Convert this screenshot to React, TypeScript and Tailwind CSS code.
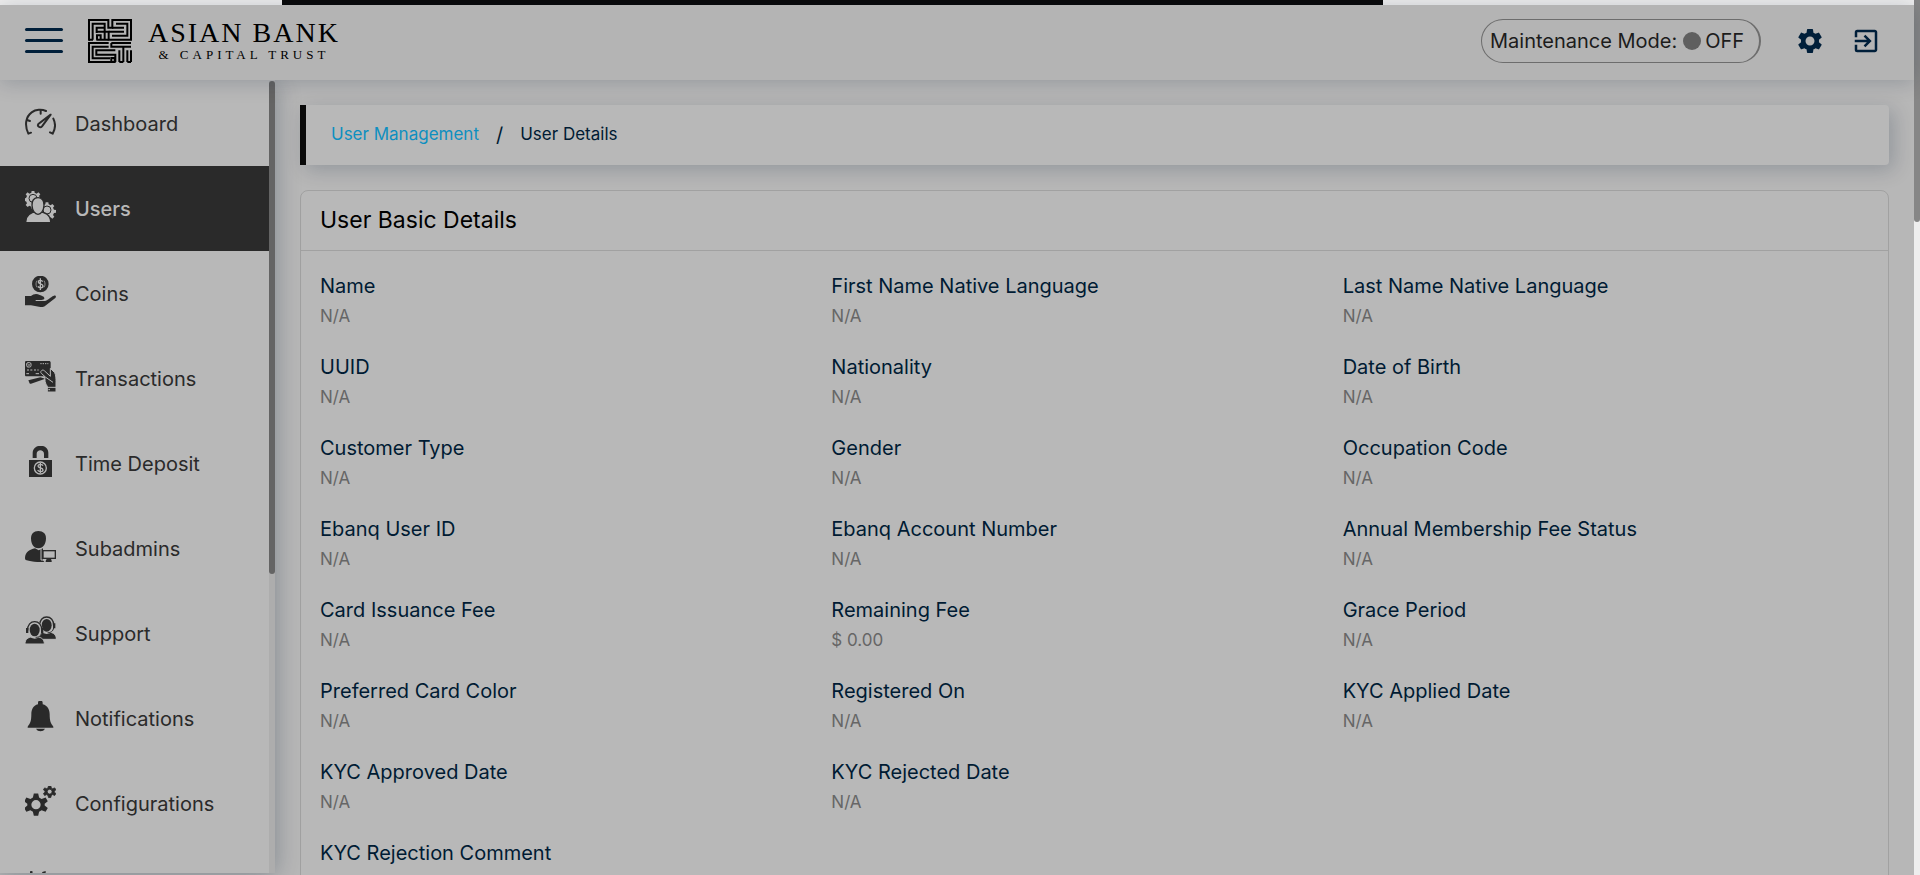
import type { ReactNode } from "react";
import { MdExitToApp, MdSettings } from "react-icons/md";

type NavItem = { label: string; icon: ReactNode; active?: boolean };
type Detail = { label: string; value?: string; last?: boolean };

function Icon({ children }: { children: ReactNode }) {
  return (
    <svg viewBox="0 0 93 93" className="mb-1 size-[31px] shrink-0" fill="currentColor" aria-hidden="true">
      {children}
    </svg>
  );
}

const gear8 =
  "M-4-23h8l1 6 6 3 5-4 6 6-4 5 3 6 6 1v8l-6 1-3 6 4 5-6 6-5-4-6 3-1 6h-8l-1-6-6-3-5 4-6-6 4-5-3-6-6-1v-8l6-1 3-6-4-5 6-6 5 4 6-3z";

const gear6 =
  "M-7-36h14l3 13 8 5 13-5 7 12-10 8v6l10 8-7 12-13-5-8 5-3 13H-7l-3-13-8-5-13 5-7-12 10-8v-6l-10-8 7-12 13 5 8-5zM0-15a15 15 0 1 0 0 30a15 15 0 1 0 0-30z";

function GaugeIcon() {
  return (
    <Icon>
      <g fill="none" stroke="currentColor" strokeWidth="6" strokeLinecap="round" strokeLinejoin="round">
        <path d="M18 80l-8 3C-2 58 2 32 20 19C32 10 50 9 63 15" />
        <path d="M85 38c7 14 6 31-2 45l-8-4" />
        <path d="M47 13v10M6 42l9 3" />
        <path d="M77 26L40 54c-4 6 5 14 11 7z" />
      </g>
    </Icon>
  );
}

function UsersIcon() {
  return (
    <Icon>
      <g transform="translate(24 22)">
        <path d={gear8} />
        <circle r="12" fill="none" stroke="#2a2a2a" strokeWidth="3" />
      </g>
      <g transform="translate(66 57)">
        <path d={gear8} />
        <circle r="12" fill="none" stroke="#2a2a2a" strokeWidth="3" />
      </g>
      <g stroke="#2a2a2a" strokeWidth="4">
        <path d="M2 96C2 72 16 63 38 62c22 0 40 10 39 34z" />
        <path d="M39 20c12 0 19 9 18 23-1 17-9 27-18 27s-17-10-18-27c-1-14 6-23 18-23z" />
      </g>
    </Icon>
  );
}

function CoinsIcon() {
  return (
    <Icon>
      <circle cx="46" cy="24" r="25" />
      <g fill="none" stroke="#b8b8b8" strokeWidth="4">
        <path d="M53 17c-3-5-13-5-13 1 0 7 14 4 14 12 0 7-12 7-15 1M46 7v35" />
        <path d="M36 14c-4 6-4 14 0 20M57 14c4 6 4 14 0 20" strokeWidth="2" />
      </g>
      <path d="M0 60h18c7-6 17-8 26-3 6 3 13 3 14 9 1 4-4 6-9 6H32v3h24c12 0 19-12 31-16 5-1 8 3 4 7L60 90c-5 4-12 3-18 2L18 88H0z" />
    </Icon>
  );
}

function TransactionsIcon() {
  return (
    <Icon>
      <path d="M4 0h68c3 0 5 2 5 5v38c0 2-1 3-3 3H4c-3 0-4-2-4-4V4c0-2 1-4 4-4z" />
      <path d="M10 58l36-9 15 4-43 15c-3 1-4-1-5-3z" />
      <g fill="none" stroke="#b8b8b8" strokeWidth="3">
        <rect x="5" y="5" width="13" height="13" rx="4" />
        <path d="M8 12h7M46 8h4M53 8h4M60 8h4M67 8h3M6 27h6M16 27h6M27 27h6M37 27h4M4 38h8M32 38h10" />
      </g>
      <path
        d="M48 31c3-5 7-5 11-1l17 16V22l13 13c4 8 4 18 4 27v31H67V76c-7-8-8-20-7-29L49 37c-2-2-2-4-1-6z"
        stroke="#b8b8b8"
        strokeWidth="3"
      />
      <path d="M61 48l23 16M65 79h28" fill="none" stroke="#b8b8b8" strokeWidth="3" />
      <path d="M70 86h5" stroke="#b8b8b8" strokeWidth="3" />
    </Icon>
  );
}

function DepositIcon() {
  return (
    <Icon>
      <path d="M23 36V21C24-8 70-8 70 21v15H57V23c0-14-22-14-22 0v13zM12 42h69v51H12z" />
      <circle cx="46" cy="66" r="18" fill="none" stroke="#b8b8b8" strokeWidth="4" />
      <path d="M54 59c-3-6-15-5-15 1 0 8 15 4 15 12 0 6-12 7-16 0M46 51v30" fill="none" stroke="#b8b8b8" strokeWidth="4" />
    </Icon>
  );
}

function SubadminsIcon() {
  return (
    <Icon>
      <path d="M40 0c15 0 23 9 23 22 0 16-8 30-23 30S18 38 18 22C18 9 26 0 40 0z" />
      <path d="M30 52l11 6 13-6v36l4 5C38 94 16 92 5 88 1 87 0 84 0 80 1 64 14 55 30 52z" />
      <path d="M52 57h41v27H78l2 5v4H62v-4l3-5H52z" />
      <path d="M56 61h33v19H56z" fill="#b8b8b8" />
      <path d="M48 53v34h14" fill="none" stroke="#b8b8b8" strokeWidth="3" />
    </Icon>
  );
}

function Agent() {
  return (
    <>
      <path d="M-29 42c0-15 9-19 20-22h18c11 3 20 7 20 22z" stroke="#b8b8b8" strokeWidth="3" />
      <ellipse cx="0" cy="-1" rx="24" ry="27" fill="#b8b8b8" />
      <path d="M-21 2C-24-34 24-34 21 2" fill="none" stroke="currentColor" strokeWidth="4" />
      <path d="M-26-6h7V9h-7zM19-6h7V9h-7z" />
      <ellipse cx="0" cy="0" rx="15" ry="19" />
      <path d="M21 7C19 19 12 22 3 22" fill="none" stroke="currentColor" strokeWidth="3" />
    </>
  );
}

function SupportIcon() {
  return (
    <Icon>
      <g transform="translate(65 28)">
        <Agent />
      </g>
      <g transform="translate(29 42)">
        <Agent />
      </g>
    </Icon>
  );
}

function BellIcon() {
  return (
    <Icon>
      <path d="M39 6c0-11 14-11 14 0v4c15 4 21 16 21 30 0 20 3 27 11 37v3H8v-3c8-10 11-17 11-37 0-14 5-26 20-30zM33 83h27c-5 10-22 10-27 0z" />
    </Icon>
  );
}

function GearsIcon() {
  return (
    <Icon>
      <path fillRule="evenodd" transform="translate(33 56) scale(.93)" d={gear6} />
      <path
        fillRule="evenodd"
        transform="translate(74 17) scale(.49)"
        stroke="currentColor"
        strokeWidth="5"
        strokeLinejoin="round"
        d={gear6}
      />
    </Icon>
  );
}

function ContentIcon() {
  return (
    <Icon>
      <path d="M15 1l7-1 2 14h-9zM52 3l10-3v18H48zM10 30h70v50H10z" />
    </Icon>
  );
}

const navItems: NavItem[] = [
  { label: "Dashboard", icon: <GaugeIcon /> },
  { label: "Users", icon: <UsersIcon />, active: true },
  { label: "Coins", icon: <CoinsIcon /> },
  { label: "Transactions", icon: <TransactionsIcon /> },
  { label: "Time Deposit", icon: <DepositIcon /> },
  { label: "Subadmins", icon: <SubadminsIcon /> },
  { label: "Support", icon: <SupportIcon /> },
  { label: "Notifications", icon: <BellIcon /> },
  { label: "Configurations", icon: <GearsIcon /> },
];

const details: Detail[] = [
  { label: "Name", value: "N/A" },
  { label: "First Name Native Language", value: "N/A" },
  { label: "Last Name Native Language", value: "N/A" },
  { label: "UUID", value: "N/A" },
  { label: "Nationality", value: "N/A" },
  { label: "Date of Birth", value: "N/A" },
  { label: "Customer Type", value: "N/A" },
  { label: "Gender", value: "N/A" },
  { label: "Occupation Code", value: "N/A" },
  { label: "Ebanq User ID", value: "N/A" },
  { label: "Ebanq Account Number", value: "N/A" },
  { label: "Annual Membership Fee Status", value: "N/A" },
  { label: "Card Issuance Fee", value: "N/A" },
  { label: "Remaining Fee", value: "$ 0.00" },
  { label: "Grace Period", value: "N/A" },
  { label: "Preferred Card Color", value: "N/A" },
  { label: "Registered On", value: "N/A" },
  { label: "KYC Applied Date", value: "N/A" },
  { label: "KYC Approved Date", value: "N/A" },
  { label: "KYC Rejected Date", value: "N/A", last: true },
  { label: "KYC Rejection Comment" },
];

function Logo() {
  return (
    <a href="#home" className="flex items-center gap-4 text-black">
      <svg viewBox="0 0 132 132" className="size-11" fill="none" stroke="currentColor" strokeWidth="6" aria-hidden="true">
        <path d="M3 65V3h58v23h12V3h56v59H62V38H50" />
        <path d="M14 62V14h36v48M3 62h12M25 62h37" />
        <path d="M26 42V26h24M26 38h24M27 62V49h11v13" />
        <path d="M84 14h34v36H72M72 26h36M62 38h46" />
        <path d="M62 72H3v57h66" />
        <path d="M62 83H14v35h52M70 72v11h59M129 72H70" />
        <path d="M82 94H25v13h57v22M94 129V94M106 83v46M118 129V94M129 94v35" />
        <path d="M70 117h10v12H70zM94 129h12M118 129h11" />
      </svg>
      <span className="flex flex-col items-center font-['Liberation_Serif',serif]">
        <span className="text-[28px] leading-7 tracking-[2px]">ASIAN BANK</span>
        <span className="text-[13px] leading-4 tracking-[4px]">&amp; CAPITAL TRUST</span>
      </span>
    </a>
  );
}

function Header() {
  return (
    <header className="relative z-20 flex h-[75px] shrink-0 items-center justify-between bg-[#b4b4b4] pr-[33px] pl-[25px] pb-1 shadow-[0_2px_20px_rgba(0,27,51,0.2)]">
      <div className="flex items-center gap-[25px]">
        <button type="button" aria-label="Toggle menu" className="flex w-[38px] flex-col gap-2">
          <span className="h-[3px] rounded-full bg-[#001f3a]" />
          <span className="h-[3px] rounded-full bg-[#001f3a]" />
          <span className="h-[3px] rounded-full bg-[#001f3a]" />
        </button>
        <Logo />
      </div>
      <div className="flex items-center">
        <button
          type="button"
          className="flex h-11 w-[280px] items-center rounded-full border border-r-2 border-[#6d6d6d] pl-2 text-xl text-[#1c1c1c]"
        >
          Maintenance Mode:
          <span className="mr-1 ml-1.5 size-[18px] rounded-full bg-[#5f5f5f]" />
          OFF
        </button>
        <button type="button" aria-label="Settings" className="ml-[34px] text-[#001f3a]">
          <MdSettings className="size-[30px]" />
        </button>
        <button type="button" aria-label="Log out" className="ml-[26px] text-[#001f3a]">
          <MdExitToApp className="size-[30px]" />
        </button>
      </div>
    </header>
  );
}

function Sidebar() {
  return (
    <aside className="relative z-10 mb-0.5 flex w-[275px] shrink-0 bg-[#b8b8b8] pt-px shadow-[0_2px_24px_rgba(0,27,51,0.3)]">
      <nav className="flex-1 overflow-hidden">
        {navItems.map((item) => (
          <a
            key={item.label}
            href={"#" + item.label.toLowerCase().replace(" ", "-")}
            className={
              item.active
                ? "flex h-[85px] items-center gap-[19px] bg-[#2a2a2a] pl-[25px] text-xl font-medium text-[#b8b8b8]"
                : "flex h-[85px] items-center gap-[19px] pl-[25px] text-xl text-[#2a2a2a]"
            }
          >
            {item.icon}
            {item.label}
          </a>
        ))}
        <div className="flex h-[85px] items-center pl-[25px] text-[#2a2a2a]">
          <ContentIcon />
        </div>
      </nav>
      <div className="w-1.5 bg-[#adadad]">
        <div className="h-[493px] rounded-full bg-[#646464]" />
      </div>
    </aside>
  );
}

export default function App() {
  return (
    <div className="flex h-screen overflow-hidden bg-[#b7b7b7] font-[Inter,sans-serif]">
      <div className="flex min-w-0 flex-1 flex-col">
        <div className="flex h-[5px] shrink-0 bg-[#eeeeee] pl-[282px]">
          <div className="w-[1101px] bg-[#0a0a0a]" />
        </div>
        <Header />
        <div className="flex min-h-0 flex-1">
          <Sidebar />
          <main className="min-w-0 flex-1 overflow-hidden px-[25px] pt-[25px]">
            <div className="flex h-[60px] items-center rounded-r border-l-6 border-[#0a0a0a] bg-[#b8b8b8] pl-[25px] text-[17px] text-[#001b33] shadow-[5px_5px_20px_rgba(0,27,51,0.2)]">
              <a href="#users" className="text-[#0d8fc0]">
                User Management
              </a>
              <span className="px-[17px] text-xl">/</span>
              <span>User Details</span>
            </div>
            <section className="mt-[25px] rounded-lg border border-[#a1a1a1] bg-[#b8b8b8]">
              <h1 className="flex h-[60px] items-center border-b border-[#a1a1a1] pl-[19px] text-[23px] text-black">
                User Basic Details
              </h1>
              <dl className="grid grid-cols-3 pt-5 pr-[34px] pl-[19px]">
                {details.map((detail) => (
                  <div key={detail.label} className={detail.last ? "col-span-2 h-[81px]" : "h-[81px]"}>
                    <dt className="text-xl leading-[30px] text-[#001b33]">{detail.label}</dt>
                    {detail.value && (
                      <dd className="text-[17px] leading-[30px] text-[#666666]">{detail.value}</dd>
                    )}
                  </div>
                ))}
              </dl>
            </section>
          </main>
        </div>
      </div>
      <div className="w-1.5 shrink-0 bg-[#eeeeee]">
        <div className="h-[222px] rounded-b-full bg-[#868686]" />
      </div>
    </div>
  );
}
